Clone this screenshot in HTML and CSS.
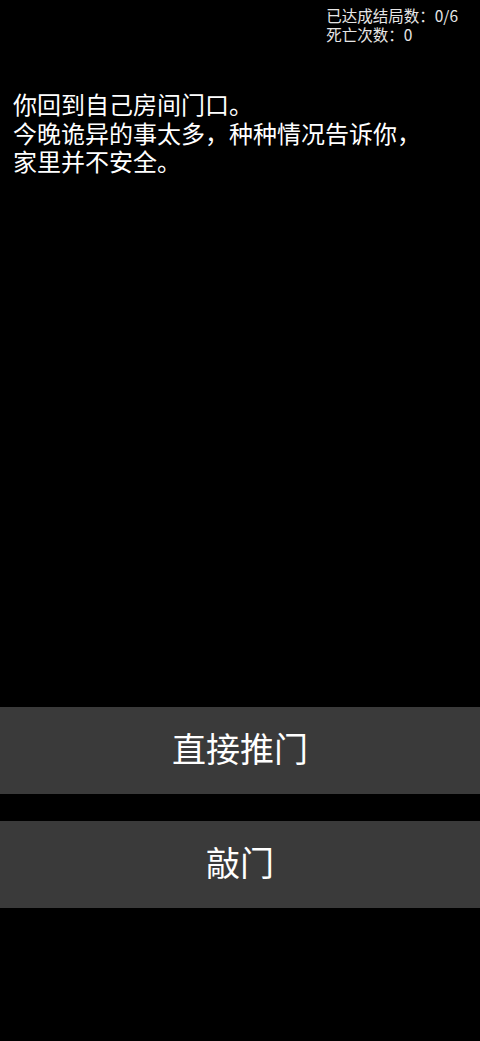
FILE: index.html
```html
<!DOCTYPE html>
<html lang="zh">
<head>
<meta charset="utf-8">
<link rel="stylesheet" href="styles.css">
</head>
<body>
<div class="page">
  <div class="stats">
    <div class="stats-box">
      <div>已达成结局数：0/6</div>
      <div>死亡次数：0</div>
    </div>
  </div>
  <div class="story">
    <p>你回到自己房间门口。</p>
    <p>今晚诡异的事太多，种种情况告诉你，</p>
    <p>家里并不安全。</p>
  </div>
  <div class="choices">
    <div class="choice">直接推门</div>
    <div class="choice">敲门</div>
  </div>
</div>
</body>
</html>
```
FILE: styles.css
```css
html, body {
  margin: 0;
  padding: 0;
  background: #000;
}
.page {
  height: 1041px;
  display: flex;
  flex-direction: column;
  font-family: "Noto Sans CJK SC", "Noto Sans", sans-serif;
  color: #fff;
}
.stats {
  display: flex;
  justify-content: flex-end;
  padding: 6px 22px 0 0;
}
.stats-box {
  font-size: 15.5px;
  line-height: 19px;
  color: #e6e6e6;
}
.story {
  flex: 1;
  padding: 46px 0 0 13px;
  font-size: 24px;
  line-height: 28.5px;
}
.story p {
  margin: 0;
}
.choices {
  display: flex;
  flex-direction: column;
  gap: 27px;
  padding-bottom: 133px;
}
.choice {
  height: 87px;
  box-sizing: border-box;
  padding-bottom: 6px;
  background: #3a3a3a;
  display: flex;
  align-items: center;
  justify-content: center;
  font-size: 34px;
  color: #fff;
}
```
